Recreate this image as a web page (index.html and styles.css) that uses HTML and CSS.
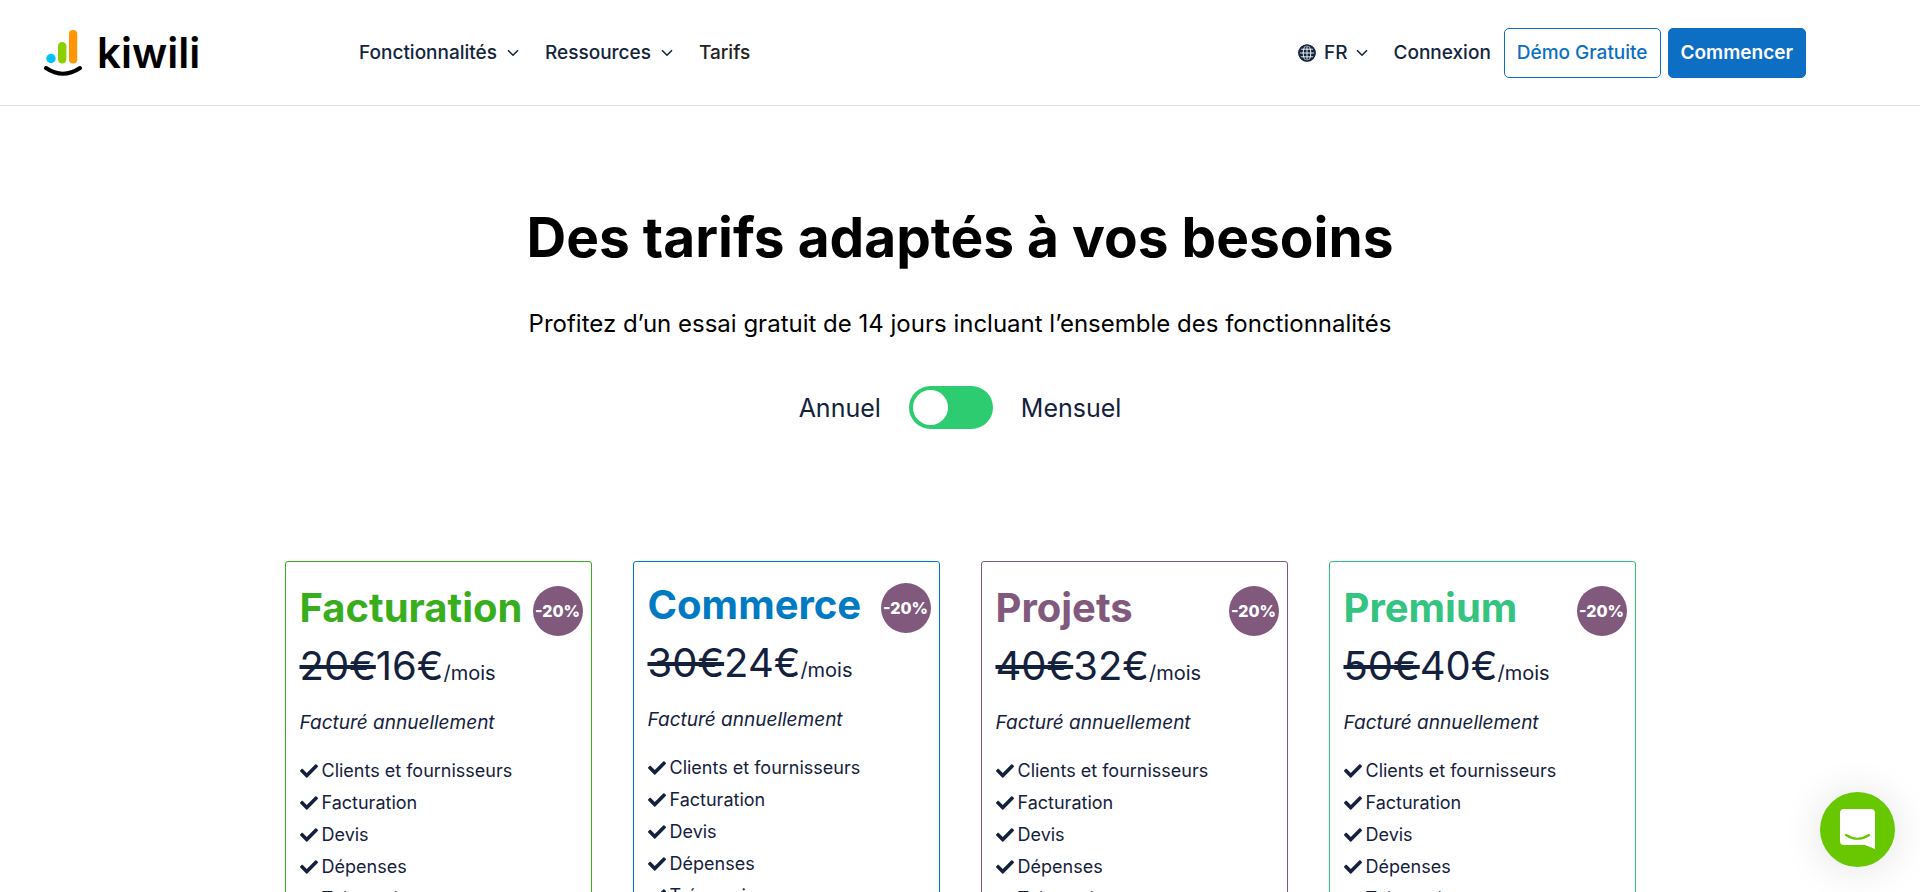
FILE: index.html
```html
<!DOCTYPE html>
<html lang="fr">
<head>
  <meta charset="UTF-8" />
  <meta name="viewport" content="width=device-width, initial-scale=1.0"/>
  <title>Tarifs - Kiwili</title>
  <link rel="stylesheet" href="styles.css">
</head>
<body>

<!-- shared icons -->
<svg class="sprite" aria-hidden="true">
  <symbol id="check" viewBox="0 60 512 392">
    <path fill="currentColor" d="M173.898 439.404l-166.4-166.4c-9.997-9.997-9.997-26.206 0-36.204l36.203-36.204c9.997-9.998 26.207-9.998 36.204 0L192 312.69 432.095 72.596c9.997-9.997 26.207-9.997 36.204 0l36.203 36.204c9.997 9.997 9.997 26.206 0 36.204l-294.4 294.401c-9.998 9.997-26.207 9.997-36.204-.001z"/>
  </symbol>
  <symbol id="chevron" viewBox="0 0 12 8">
    <path d="M1 1.2 L6 6.2 L11 1.2" fill="none" stroke="currentColor" stroke-width="1.6"/>
  </symbol>
</svg>

<header class="header">
  <a class="logo" href="#">
    <svg class="logo-mark" viewBox="0 0 40 48" aria-hidden="true">
      <circle cx="8" cy="29.5" r="4.7" fill="#00c3ff"/>
      <rect x="15" y="13" width="8.4" height="21.5" rx="4.2" fill="#8ad000"/>
      <rect x="26" y="1" width="8.2" height="33.5" rx="4.1" fill="#ff9500"/>
      <path d="M3 39 Q20 50.5 37 39" fill="none" stroke="#000" stroke-width="4" stroke-linecap="round"/>
    </svg>
    <span class="logo-text">kiwili</span>
  </a>

  <nav class="nav">
    <a class="nav-link" href="#">Fonctionnalités <svg class="chevron"><use href="#chevron"/></svg></a>
    <a class="nav-link" href="#">Ressources <svg class="chevron"><use href="#chevron"/></svg></a>
    <a class="nav-link active" href="#">Tarifs</a>
  </nav>

  <div class="actions">
    <a class="nav-link lang" href="#">
      <svg class="globe" viewBox="0 0 18 18" aria-hidden="true">
        <circle cx="9" cy="9" r="8.6" fill="#13253d"/>
        <path d="M9 1.500 V16.500 M1.500 9 H16.500 M2.500 5.200 H15.500 M2.500 12.800 H15.500" stroke="#fff" stroke-width=".9" fill="none"/>
        <ellipse cx="9" cy="9" rx="3.800" ry="7.800" fill="none" stroke="#fff" stroke-width=".9"/>
        <circle cx="9" cy="9" r="8" fill="none" stroke="#13253d" stroke-width="1.5"/>
      </svg>
      FR <svg class="chevron"><use href="#chevron"/></svg>
    </a>
    <a class="nav-link login" href="#">Connexion</a>
    <a class="btn btn-outline" href="#">Démo Gratuite</a>
    <a class="btn btn-primary" href="#">Commencer</a>
  </div>
</header>

<main>
  <section class="intro">
    <h1>Des tarifs adaptés à vos besoins</h1>
    <p>Profitez d’un essai gratuit de 14 jours incluant l’ensemble des fonctionnalités</p>
    <div class="billing">
      <label for="billing">Annuel</label>
      <input class="switch" type="checkbox" id="billing" aria-label="Annuel ou mensuel">
      <label for="billing">Mensuel</label>
    </div>
  </section>

  <section class="plans">
    <div class="plan green">
      <div class="plan-head">
        <h2>Facturation</h2>
        <span class="badge">-20%</span>
      </div>
      <p class="price"><s>20€</s>16€<small>/mois</small></p>
      <p class="period">Facturé annuellement</p>
      <ul>
        <li><svg class="check"><use href="#check"/></svg>Clients et fournisseurs</li>
        <li><svg class="check"><use href="#check"/></svg>Facturation</li>
        <li><svg class="check"><use href="#check"/></svg>Devis</li>
        <li><svg class="check"><use href="#check"/></svg>Dépenses</li>
        <li><svg class="check"><use href="#check"/></svg>Trésorerie</li>
      </ul>
    </div>

    <div class="plan blue">
      <div class="plan-head">
        <h2>Commerce</h2>
        <span class="badge">-20%</span>
      </div>
      <p class="price"><s>30€</s>24€<small>/mois</small></p>
      <p class="period">Facturé annuellement</p>
      <ul>
        <li><svg class="check"><use href="#check"/></svg>Clients et fournisseurs</li>
        <li><svg class="check"><use href="#check"/></svg>Facturation</li>
        <li><svg class="check"><use href="#check"/></svg>Devis</li>
        <li><svg class="check"><use href="#check"/></svg>Dépenses</li>
        <li><svg class="check"><use href="#check"/></svg>Trésorerie</li>
      </ul>
    </div>

    <div class="plan purple">
      <div class="plan-head">
        <h2>Projets</h2>
        <span class="badge">-20%</span>
      </div>
      <p class="price"><s>40€</s>32€<small>/mois</small></p>
      <p class="period">Facturé annuellement</p>
      <ul>
        <li><svg class="check"><use href="#check"/></svg>Clients et fournisseurs</li>
        <li><svg class="check"><use href="#check"/></svg>Facturation</li>
        <li><svg class="check"><use href="#check"/></svg>Devis</li>
        <li><svg class="check"><use href="#check"/></svg>Dépenses</li>
        <li><svg class="check"><use href="#check"/></svg>Trésorerie</li>
      </ul>
    </div>

    <div class="plan mint">
      <div class="plan-head">
        <h2>Premium</h2>
        <span class="badge">-20%</span>
      </div>
      <p class="price"><s>50€</s>40€<small>/mois</small></p>
      <p class="period">Facturé annuellement</p>
      <ul>
        <li><svg class="check"><use href="#check"/></svg>Clients et fournisseurs</li>
        <li><svg class="check"><use href="#check"/></svg>Facturation</li>
        <li><svg class="check"><use href="#check"/></svg>Devis</li>
        <li><svg class="check"><use href="#check"/></svg>Dépenses</li>
        <li><svg class="check"><use href="#check"/></svg>Trésorerie</li>
      </ul>
    </div>
  </section>
</main>

<button class="chat" type="button" aria-label="Ouvrir le chat">
  <svg viewBox="0 0 36 41" aria-hidden="true">
    <path d="M4 0 H31 Q35 0 35 4 V40 L25 36 H4 Q0 36 0 32 V4 Q0 0 4 0 Z" fill="#fff"/>
    <path d="M6 26 Q17.500 33.500 29 26" fill="none" stroke="#67c700" stroke-width="2.200" stroke-linecap="round"/>
  </svg>
</button>

</body>
</html>
```

FILE: styles.css
```css
* { box-sizing: border-box; margin: 0; padding: 0; }

body {
  font-family: "Inter", sans-serif;
  font-size: 18px;
  color: #14213d;
  background: #fff;
}

a {
  color: inherit;
  text-decoration: none;
}

.sprite {
  display: none;
}

/* header */
.header {
  display: flex;
  align-items: center;
  height: 106px;
  padding: 0 114px 0 43px;
  border-bottom: 1px solid #e2e2e2;
}

.logo {
  display: flex;
  align-items: center;
  gap: 14px;
  width: 316px;
  color: #000;
}

.logo-mark {
  width: 40px;
  height: 48px;
}

.logo-text {
  font-size: 42px;
  font-weight: 600;
  line-height: 48px;
}

.nav, .actions {
  display: flex;
  align-items: center;
}

.nav {
  gap: 26px;
}

.nav-link {
  display: flex;
  align-items: center;
  gap: 10px;
  font-size: 19px;
  font-weight: 500;
  color: #13253d;
}

.nav-link.active {
  color: #222;
}

.chevron {
  width: 12px;
  height: 8px;
}

.actions {
  margin-left: auto;
}

.lang {
  gap: 8px;
}

.globe {
  width: 18px;
  height: 18px;
}

.login {
  margin: 0 13px 0 26px;
}

.btn {
  padding: 0 12px;
  font-size: 19px;
  font-weight: 600;
  line-height: 48px;
  border: 1px solid #0d6fc4;
  border-radius: 5px;
}

.btn-outline {
  font-weight: 500;
  color: #0d6fc4;
}

.btn-primary {
  margin-left: 7px;
  background: #0d6fc4;
  color: #fff;
}

/* intro */
.intro {
  padding-top: 96px;
  text-align: center;
}

.intro h1 {
  font-size: 55px;
  line-height: 70px;
  color: #000;
}

.intro p {
  margin-top: 34px;
  font-size: 24px;
  line-height: 36px;
  color: #000;
}

.billing {
  display: flex;
  justify-content: center;
  align-items: center;
  gap: 28px;
  margin-top: 44px;
  font-size: 25px;
}

.switch {
  appearance: none;
  display: flex;
  width: 84px;
  height: 43px;
  padding: 4px;
  border-radius: 22px;
  background: #2ecc71;
  cursor: pointer;
}

.switch::before {
  content: "";
  width: 35px;
  height: 35px;
  border-radius: 50%;
  background: #fff;
}

.switch:checked {
  justify-content: flex-end;
}

/* plans */
.plans {
  display: grid;
  grid-template-columns: repeat(4, 1fr);
  gap: 41px;
  max-width: 1351px;
  margin: 132px auto 60px;
}

.plan {
  padding: 24px 8px 30px 14px;
  border: 1px solid;
  border-radius: 3px;
}

.plan.blue {
  padding-top: 21px;
}

.green { border-color: #38ad1e; }
.blue { border-color: #007ac3; }
.purple { border-color: #80597d; }
.mint { border-color: #34c381; }

.green h2 { color: #38ad1e; }
.blue h2 { color: #007ac3; }
.purple h2 { color: #80597d; }
.mint h2 { color: #34c381; }

.plan-head {
  display: flex;
  justify-content: space-between;
}

.plan h2 {
  font-size: 40px;
  line-height: 44px;
}

.badge {
  width: 50px;
  height: 50px;
  border-radius: 50%;
  background: #80597d;
  color: #fff;
  font-size: 16px;
  font-weight: 800;
  line-height: 50px;
  text-align: center;
}

.price {
  margin-top: 6px;
  font-size: 40px;
  line-height: 48px;
}

.price small {
  font-size: 20px;
}

.period {
  margin-top: 10px;
  font-size: 19px;
  font-style: italic;
  line-height: 32px;
}

.plan ul {
  margin-top: 16px;
  list-style: none;
}

.plan li {
  display: flex;
  align-items: center;
  gap: 4px;
  line-height: 32px;
}

.check {
  width: 18px;
  height: 14px;
}

/* chat bubble */
.chat {
  position: fixed;
  right: 25px;
  bottom: 25px;
  display: flex;
  justify-content: center;
  align-items: center;
  width: 75px;
  height: 75px;
  border: none;
  border-radius: 50%;
  background: #67c700;
  box-shadow: 0 2px 40px rgba(0, 0, 0, 0.12);
  cursor: pointer;
}

.chat svg {
  width: 36px;
  height: 41px;
}
```
